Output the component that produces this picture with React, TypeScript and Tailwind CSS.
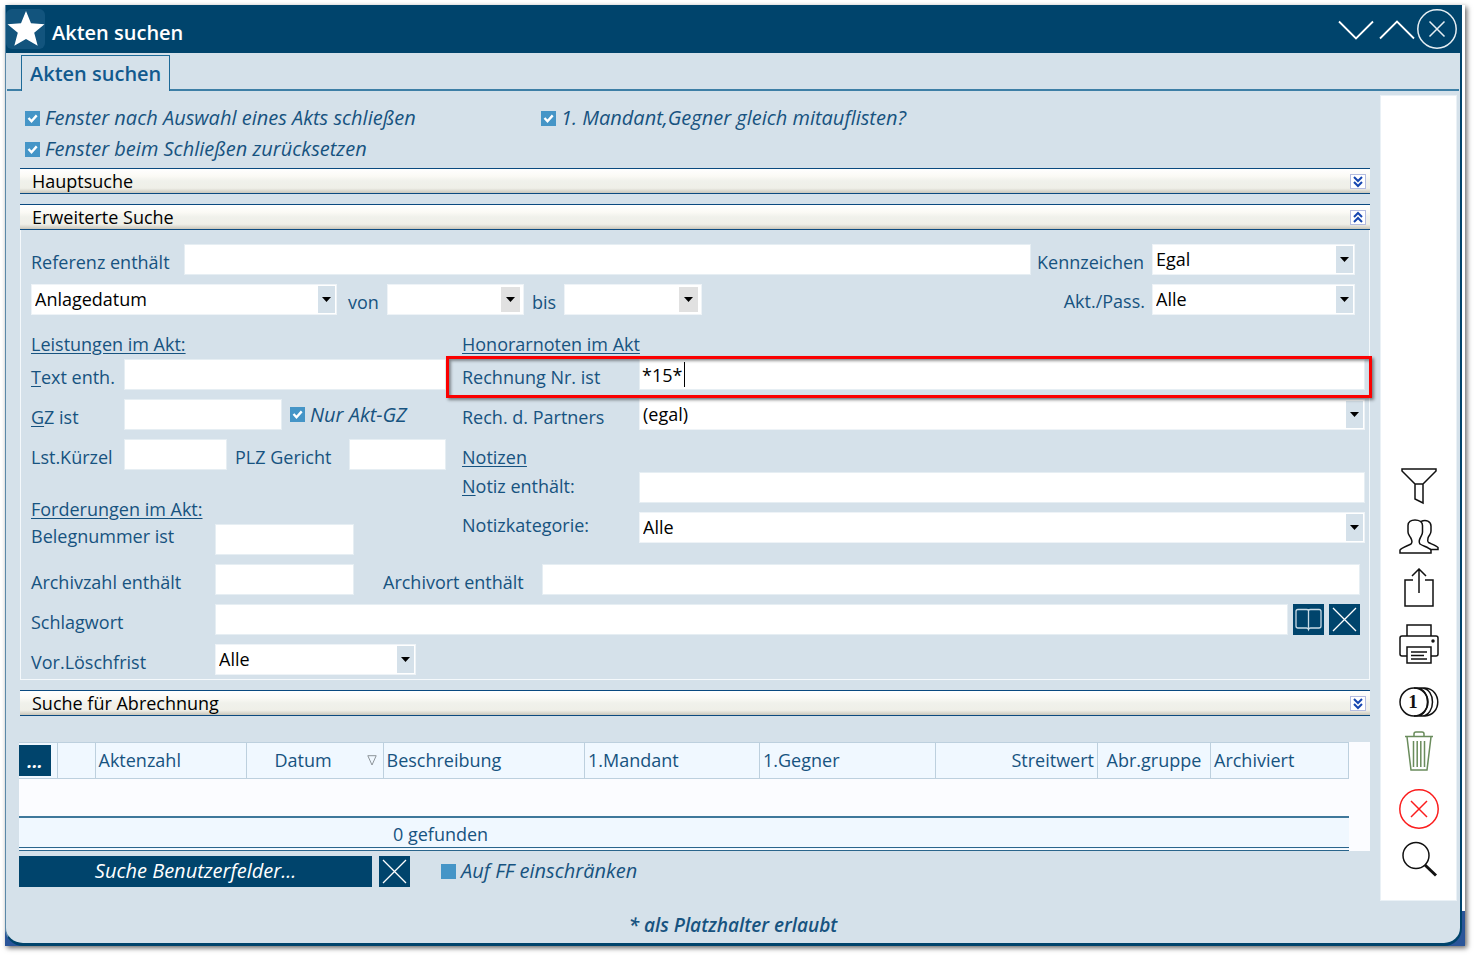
import { useState } from 'react';
import type { ReactNode } from 'react';

const inputClass = 'h-[31px] min-w-0 border border-[#e6eef3] bg-white px-[2px] text-[18px] text-black outline-none';

function Label({ htmlFor, className = '', children }: { htmlFor: string; className?: string; children: ReactNode }) {
    return (
        <label htmlFor={htmlFor} className={`shrink-0 whitespace-nowrap leading-6 ${className}`}>
            {children}
        </label>
    );
}

function Heading({ className = '', children }: { className?: string; children: ReactNode }) {
    return <h3 className={`leading-6 underline underline-offset-2 ${className}`}>{children}</h3>;
}

function Select({ id, options, className = '', label, grey = false }: { id: string; options: string[]; className?: string; label?: string; grey?: boolean }) {
    return (
        <div className={`relative ${className}`}>
            <select
                id={id}
                aria-label={label}
                className="block h-[31px] w-full appearance-none border border-[#eef3f7] bg-white pr-5 pl-[3px] text-[18px] text-black outline-none"
            >
                {options.map((option) => (
                    <option key={option}>{option}</option>
                ))}
            </select>
            <span
                className={
                    grey
                        ? 'pointer-events-none absolute top-[3px] right-[4px] bottom-[3px] flex w-[19px] items-center justify-center bg-[#e1e1e1]'
                        : 'pointer-events-none absolute top-[2px] right-[2px] bottom-[2px] flex w-[17px] items-center justify-center bg-[#d5e1ea]'
                }
            >
                <svg width="9" height="5" viewBox="0 0 9 5">
                    <path d="M0 0h9L4.500 5z" fill="#000" />
                </svg>
            </span>
        </div>
    );
}

function Checkbox({ id, label, initial = true }: { id: string; label: string; initial?: boolean }) {
    const [checked, setChecked] = useState(initial);
    return (
        <div className="flex items-center gap-[5px]">
            <span className="relative flex">
                <input
                    id={id}
                    type="checkbox"
                    checked={checked}
                    onChange={(e) => setChecked(e.target.checked)}
                    className="size-[15px] appearance-none bg-[#4595c7]"
                />
                {checked && (
                    <svg className="pointer-events-none absolute inset-0" width="15" height="15" viewBox="0 0 15 15">
                        <path d="M3.5 7l3 3.2 5.2-5.8" fill="none" stroke="#fff" strokeWidth="2.4" />
                    </svg>
                )}
            </span>
            <label htmlFor={id} className="text-[20px] leading-6 whitespace-nowrap italic">
                {label}
            </label>
        </div>
    );
}

function SectionBar({ title, open = false, className = '' }: { title: string; open?: boolean; className?: string }) {
    return (
        <button
            type="button"
            aria-expanded={open}
            className={`flex h-[26px] w-full items-center justify-between border-y border-[#0b4a80] bg-[linear-gradient(to_bottom,#ffffff_0%,#fbfaf5_30%,#f0f1eb_50%,#efefe8_80%,#c9c6bb_100%)] pr-1 pl-[12px] text-black ${className}`}
        >
            <span className="leading-6">{title}</span>
            <svg width="16" height="15" viewBox="0 0 16 15" fill="none">
                <rect x="0.5" y="0.5" width="15" height="14" fill="#fff" stroke="#b4bce0" />
                <path
                    d={open ? 'M4 7l4-4 4 4M4 12l4-4 4 4' : 'M4 3l4 4 4-4M4 8l4 4 4-4'}
                    stroke="#1546b0"
                    strokeWidth="2"
                />
            </svg>
        </button>
    );
}

function CrossButton({ label }: { label: string }) {
    return (
        <button type="button" aria-label={label} className="size-[31px] shrink-0 bg-[#00446c]">
            <svg width="31" height="31" viewBox="0 0 31 31" stroke="#fff" strokeWidth="1.3">
                <path d="M4 4l23 23M27 4L4 27" />
            </svg>
        </button>
    );
}

function ToolButton({ label, className = '', children }: { label: string; className?: string; children: ReactNode }) {
    return (
        <button type="button" aria-label={label} className={`size-10 ${className}`}>
            <svg width="40" height="40" viewBox="0 0 40 40" fill="none" stroke="#111" strokeWidth="1.5">
                {children}
            </svg>
        </button>
    );
}

function TitleBar() {
    return (
        <header className="flex h-12 items-center bg-[#00446c] pr-[3px] text-white">
            <span className="flex h-10 w-[39px] items-center justify-center rounded-md bg-[#12547d]">
                <svg width="38" height="36" viewBox="0 0 38 36" fill="#fff">
                    <path d="M19 0l5 12.2 13.5 1-10.3 8.6 3.5 13L19 28l-11.700 6.800 3.500-13L.5 13.200l13.500-1z" />
                </svg>
            </span>
            <h1 className="mt-2 ml-[7px] grow text-[20px] leading-6 font-semibold">Akten suchen</h1>
            <div className="flex items-center gap-[3px]">
                <button type="button" aria-label="Nach unten">
                    <svg width="38" height="40" viewBox="0 0 38 40" fill="none" stroke="#fff" strokeWidth="1.8">
                        <path d="M1 12.500l17 17 17-17" />
                    </svg>
                </button>
                <button type="button" aria-label="Nach oben">
                    <svg width="38" height="40" viewBox="0 0 38 40" fill="none" stroke="#fff" strokeWidth="1.8">
                        <path d="M1 29.500l17-17 17 17" />
                    </svg>
                </button>
                <button type="button" aria-label="Schließen" className="-ml-[3px]">
                    <svg width="40" height="40" viewBox="0 0 40 40" fill="none" stroke="#e6eef3" strokeWidth="1.5">
                        <circle cx="20" cy="20" r="19.200" />
                        <path d="M12.500 12.500l15 15M27.500 12.500l-15 15" />
                    </svg>
                </button>
            </div>
        </header>
    );
}

function ExtendedSearch() {
    return (
        <div className="flex flex-col gap-[9px] border border-t-0 border-[#f5f9fc] pt-[14px] pb-[4px] pl-[10px]">
            <div className="flex pr-[14px]">
                <Label htmlFor="referenz" className="w-[153px] pt-[6px]">Referenz enthält</Label>
                <input id="referenz" className={`grow ${inputClass}`} />
                <Label htmlFor="kennzeichen" className="w-[121px] pt-[6px] pl-[6px]">Kennzeichen</Label>
                <Select id="kennzeichen" options={['Egal', 'Ja', 'Nein']} className="w-[203px] shrink-0" />
            </div>
            <div className="flex pr-[14px]">
                <Select id="datumsart" label="Datumsart" options={['Anlagedatum', 'Änderungsdatum']} className="w-[306px]" />
                <Label htmlFor="von" className="w-[50px] pt-[6px] pl-[11px]">von</Label>
                <Select id="von" options={['']} className="w-[137px]" grey />
                <Label htmlFor="bis" className="w-10 pt-[6px] pl-[8px]">bis</Label>
                <Select id="bis" options={['']} className="w-[138px]" grey />
                <Label htmlFor="aktpass" className="ml-auto pt-[5px] pr-[7px]">Akt./Pass.</Label>
                <Select id="aktpass" options={['Alle', 'Aktiv', 'Passiv']} className="w-[203px] shrink-0" />
            </div>

            <div className="flex gap-4 pt-[8px] pr-[4px]">
                <div className="flex w-[415px] shrink-0 flex-col">
                    <Heading className="mb-[3px]">Leistungen im Akt:</Heading>
                    <div className="flex flex-col gap-[9px]">
                        <div className="flex">
                            <Label htmlFor="text" className="w-[93px] pt-[6px]"><u className="underline-offset-2">T</u>ext enth.</Label>
                            <input id="text" className={`grow ${inputClass}`} />
                        </div>
                        <div className="flex">
                            <Label htmlFor="gz" className="w-[93px] pt-[6px]"><u className="underline-offset-2">G</u>Z ist</Label>
                            <input id="gz" className={`mr-[8px] w-[158px] ${inputClass}`} />
                            <Checkbox id="nur-akt-gz" label="Nur Akt-GZ" />
                        </div>
                        <div className="flex">
                            <Label htmlFor="kuerzel" className="w-[93px] pt-[6px]">Lst.Kürzel</Label>
                            <input id="kuerzel" className={`w-[103px] ${inputClass}`} />
                            <Label htmlFor="plz" className="w-[122px] pt-[6px] pl-[8px]">PLZ Gericht</Label>
                            <input id="plz" className={`w-[97px] ${inputClass}`} />
                        </div>
                    </div>
                    <Heading className="mt-[27px] mb-[3px]">Forderungen im Akt:</Heading>
                    <div className="flex">
                        <Label htmlFor="beleg" className="w-[184px]">Belegnummer ist</Label>
                        <input id="beleg" className={`w-[139px] ${inputClass}`} />
                    </div>
                </div>

                <div className="flex min-w-0 grow flex-col">
                    <Heading className="mb-[3px]">Honorarnoten im Akt</Heading>
                    <div className="flex flex-col gap-[9px]">
                        <div className="relative flex">
                            <Label htmlFor="rechnung" className="w-[177px] pt-[6px]">Rechnung Nr. ist</Label>
                            <input id="rechnung" defaultValue="*15*" className={`grow ${inputClass}`} />
                            <span className="pointer-events-none absolute top-[3px] left-[222px] h-[25px] w-px bg-black" />
                            <div className="pointer-events-none absolute -top-[3px] -right-[7px] -bottom-[8px] -left-4 z-10 border-3 border-[#fb0000] shadow-[2px_2px_3px_rgba(0,0,0,0.45),inset_2px_2px_3px_rgba(0,0,0,0.4)]" />
                        </div>
                        <div className="flex">
                            <Label htmlFor="partner" className="w-[177px] pt-[6px]">Rech. d. Partners</Label>
                            <Select id="partner" options={['(egal)']} className="grow" />
                        </div>
                    </div>
                    <Heading className="mt-[15px] mb-[3px]">Notizen</Heading>
                    <div className="flex flex-col gap-[9px]">
                        <div className="flex">
                            <Label htmlFor="notiz" className="w-[177px] pt-[2px]"><u className="underline-offset-2">N</u>otiz enthält:</Label>
                            <input id="notiz" className={`grow ${inputClass}`} />
                        </div>
                        <div className="flex">
                            <Label htmlFor="notizkategorie" className="w-[177px] pt-px">Notizkategorie:</Label>
                            <Select id="notizkategorie" options={['Alle']} className="grow" />
                        </div>
                    </div>
                </div>
            </div>

            <div className="flex pr-[9px]">
                <Label htmlFor="archivzahl" className="w-[184px] pt-[6px]">Archivzahl enthält</Label>
                <input id="archivzahl" className={`w-[139px] ${inputClass}`} />
                <Label htmlFor="archivort" className="w-[188px] pt-[6px] pl-[29px]">Archivort enthält</Label>
                <input id="archivort" className={`grow ${inputClass}`} />
            </div>
            <div className="flex pr-[9px]">
                <Label htmlFor="schlagwort" className="w-[184px] pt-[6px]">Schlagwort</Label>
                <input id="schlagwort" className={`grow ${inputClass}`} />
                <div className="ml-[5px] flex gap-[5px]">
                    <button type="button" aria-label="Schlagwort wählen" className="size-[31px] bg-[#00446c]">
                        <svg width="31" height="31" viewBox="0 0 31 31" fill="none" stroke="#c9dbe6" strokeWidth="1.3">
                            <path d="M15.500 6.500q-.5-1-2-1H5q-2 0-2 2v14.500q0 2 2 2h8.500q1.500 0 2 1.500.5-1.500 2-1.500H26q2 0 2-2V7.500q0-2-2-2h-8.500q-1.500 0-2 1zv19.500" />
                        </svg>
                    </button>
                    <CrossButton label="Schlagwort löschen" />
                </div>
            </div>
            <div className="flex">
                <Label htmlFor="loeschfrist" className="w-[184px] pt-[6px]">Vor.Löschfrist</Label>
                <Select id="loeschfrist" options={['Alle']} className="w-[201px]" />
            </div>
        </div>
    );
}

function ResultTable() {
    const th = 'border border-[#bdd0de] px-[3px] font-normal whitespace-nowrap';
    return (
        <div className="-ml-px bg-[#fbfcff] pr-[21px]">
            <table className="w-full table-fixed border-collapse">
                <colgroup>
                    <col className="w-[38px]" />
                    <col className="w-[38px]" />
                    <col className="w-[151px]" />
                    <col className="w-[137px]" />
                    <col />
                    <col className="w-[175px]" />
                    <col className="w-[176px]" />
                    <col className="w-[162px]" />
                    <col className="w-[113px]" />
                    <col className="w-[138px]" />
                </colgroup>
                <thead>
                    <tr className="h-9 bg-[#f0f8ff] text-left">
                        <th className="border-y border-[#bdd0de] p-0">
                            <button type="button" aria-label="Spalten" className="block h-[31px] w-8 bg-[#00446c] text-[18px] leading-6 text-white italic">
                                ...
                            </button>
                        </th>
                        <th className={th} />
                        <th className={th}>Aktenzahl</th>
                        <th className={th}>
                            <span className="flex items-center justify-between pr-[3px] pl-[25px]">
                                Datum
                                <svg width="10" height="11" viewBox="0 0 10 11" fill="none" stroke="#8d9499">
                                    <path d="M.8.700h8.400L5 10z" />
                                </svg>
                            </span>
                        </th>
                        <th className={th}>Beschreibung</th>
                        <th className={th}>1.Mandant</th>
                        <th className={th}>1.Gegner</th>
                        <th className={`${th} text-right`}>Streitwert</th>
                        <th className={`${th} text-center`}>Abr.gruppe</th>
                        <th className={th}>Archiviert</th>
                    </tr>
                </thead>
                <tbody>
                    <tr className="h-[38px]">
                        <td colSpan={10} />
                    </tr>
                </tbody>
                <tfoot>
                    <tr className="h-8 border-t-2 border-b-4 border-t-[#3f789b] border-b-[#2a658c] bg-[#f0f8ff] [border-bottom-style:double]">
                        <td colSpan={10} className="pt-[3px] pl-[374px] leading-6">0 gefunden</td>
                    </tr>
                </tfoot>
            </table>
        </div>
    );
}

function Sidebar() {
    return (
        <aside className="mt-1 mb-[42px] flex w-[77px] shrink-0 flex-col items-center justify-end border border-[#eaf1f6] bg-white pb-[21px] pl-px">
            <ToolButton label="Filter">
                <path d="M3 3h34v2L24 18H16L3 5zM16 18v15l8 4V18" />
            </ToolButton>
            <ToolButton label="Personen" className="mt-[11px]">
                <path d="M1 36v-3c1-2 7-4 11-6 1.500-1.500 1-4-.5-6.500-1-2-2.500-3-2.500-5.500V8.500C9 5 12 3 16 3s7.500 2 7.500 5.500V15c0 2.500-1 3.500-2 5.500-1.500 2.500-1.500 5-.5 6.500 3 2 9 3.500 11 6v3z" />
                <path d="M22 4.500c5-2.500 10 0 10 4.500v5c0 3.500-2 4-3 7-.5 2-.5 3.500.5 4.500 3 1.500 7.500 3 9.500 5v2h-8" />
            </ToolButton>
            <ToolButton label="Exportieren" className="mt-[11px]">
                <path d="M14 12H6v26h28V12h-8M20 25V1M13 8l7-7 7 7" />
            </ToolButton>
            <ToolButton label="Drucken" className="mt-4">
                <path d="M8 12V1h24v11M8 32H3q-2 0-2-2V14q0-2 2-2h34q2 0 2 2v16q0 2-2 2h-5M8 23h24v16H8zM12 28h16M12 31.500h13M12 35h16" />
                <circle cx="34" cy="17" r="1" fill="#111" />
            </ToolButton>
            <ToolButton label="Honorar" className="mt-[18px]">
                <circle cx="15" cy="20" r="14" />
                <path d="M18 6c14 1 14 27 0 28M23 6c14 1 14 27 0 28M26 6c17 1 17 27 0 28M15 6h11M15 34h11" />
                <text x="14" y="26" textAnchor="middle" fill="#111" stroke="none" className="font-['Liberation_Serif',serif] text-[19px] font-bold">1</text>
            </ToolButton>
            <ToolButton label="Löschen" className="mt-[9px]">
                <g stroke="#6a8c5c">
                    <path d="M6 5.500h28M8 6l4 33h16l4-33M15 5V3q0-2 2-2h6q2 0 2 2v2M14.500 10v26M18.200 10v26M21.800 10v26M25.500 10v26" />
                </g>
            </ToolButton>
            <ToolButton label="Abbrechen" className="mt-[18px]">
                <g stroke="#fb1d1d">
                    <circle cx="20" cy="20" r="19.200" />
                    <path d="M12 12l16 16M28 12L12 28" />
                </g>
            </ToolButton>
            <ToolButton label="Suchen" className="mt-[10px]">
                <circle cx="17" cy="16.500" r="13" />
                <path d="M26 26l11 10.500" strokeWidth="3" />
            </ToolButton>
        </aside>
    );
}

export default function App() {
    return (
        <div className="bg-white py-[5px] pr-[9px] pb-[9px] pl-[5px] font-['Open_Sans','Noto_Sans',sans-serif] text-[18px] text-[#175380]">
            <div className="bg-linear-to-t from-[#2a5599] from-[35px] to-white to-[35px] pr-[3px] shadow-[2px_2px_5px_rgba(0,0,0,0.6)]">
                <div className="overflow-hidden rounded-b-[18px] border-r-2 border-b-3 border-l border-[#00446c] border-l-[#5a88a8] bg-[#d5e1ea]">
                    <TitleBar />
                    <nav className="flex h-[38px] px-px pt-[2px]">
                        <span className="w-[14px] border-b-2 border-[#3d7fa6]" />
                        <button type="button" className="border border-b-0 border-[#1d6a98] px-[8px] text-[20px] leading-6 font-semibold text-[#125a8e]">
                            Akten suchen
                        </button>
                        <span className="grow border-b-2 border-[#3d7fa6]" />
                    </nav>
                    <div className="flex pr-[3px]">
                        <main className="flex min-w-0 grow flex-col pr-[10px] pl-[14px]">
                            <div className="grid grid-cols-[516px_1fr] gap-y-[7px] pt-[15px] pl-[5px]">
                                <Checkbox id="nach-auswahl" label="Fenster nach Auswahl eines Akts schließen" />
                                <Checkbox id="mitauflisten" label="1. Mandant,Gegner gleich mitauflisten?" />
                                <Checkbox id="zuruecksetzen" label="Fenster beim Schließen zurücksetzen" />
                            </div>
                            <SectionBar title="Hauptsuche" className="mt-[7px]" />
                            <SectionBar title="Erweiterte Suche" open className="mt-[10px]" />
                            <ExtendedSearch />
                            <SectionBar title="Suche für Abrechnung" className="mt-[10px] mb-[26px]" />
                            <ResultTable />
                            <div className="mt-[5px] -ml-px flex items-center">
                                <button type="button" className="mr-[7px] h-[31px] w-[353px] bg-[#00446c] text-[20px] leading-6 text-white italic">
                                    Suche Benutzerfelder...
                                </button>
                                <CrossButton label="Benutzerfelder löschen" />
                                <div className="ml-[31px]">
                                    <Checkbox id="auf-ff" label="Auf FF einschränken" initial={false} />
                                </div>
                            </div>
                            <p className="mt-[26px] mb-[6px] pl-[76px] text-center text-[19px] leading-6 font-semibold italic">* als Platzhalter erlaubt</p>
                        </main>
                        <Sidebar />
                    </div>
                </div>
            </div>
        </div>
    );
}
